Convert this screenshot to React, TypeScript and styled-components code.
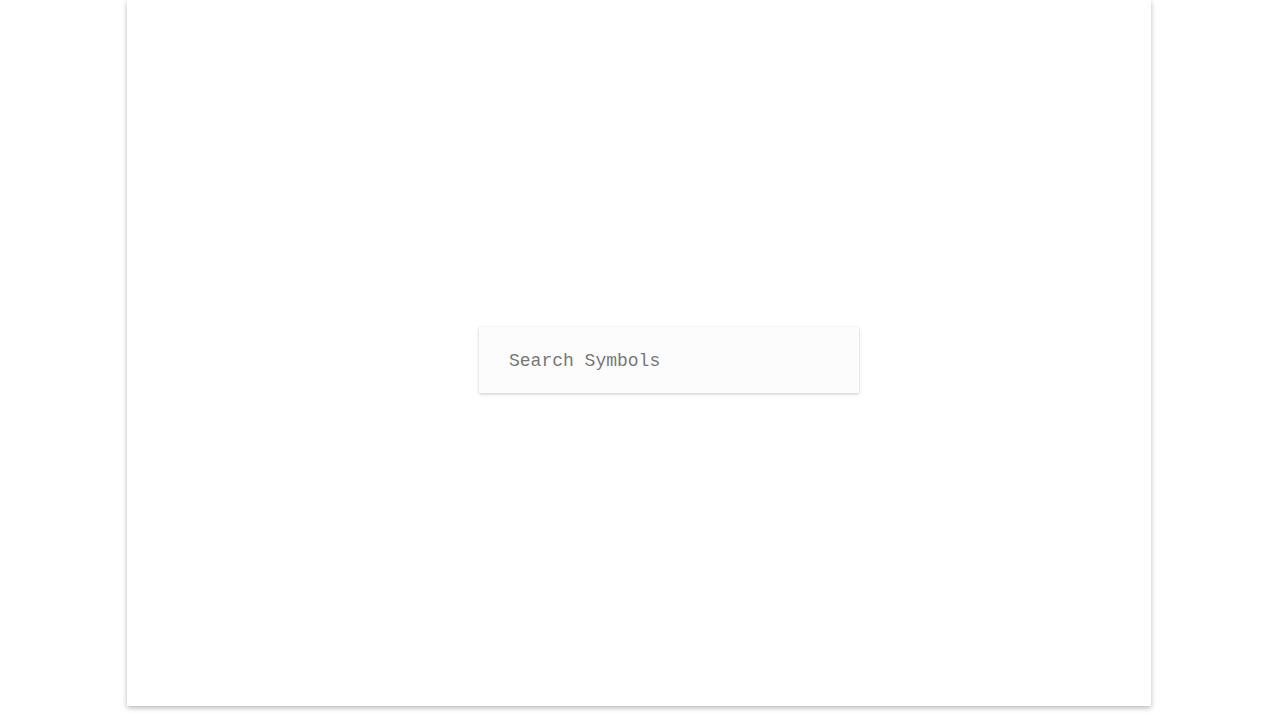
import { createGlobalStyle } from 'styled-components';
import styled from 'styled-components';

// シンボル検索の空画面。中央のパネルに検索ボックスだけが置かれている。

export default function App() {
  return (
    <>
      <GlobalStyle />
      <Page>
        <Panel>
          <SearchInput type="text" placeholder="Search Symbols" />
        </Panel>
      </Page>
    </>
  );
}

// ─── Styled Components ───────────────────────────────────────────

const GlobalStyle = createGlobalStyle`
  html, body {
    margin: 0;
    padding: 0;
    background-color: #ffffff;
  }
`;

// 奇数幅のウィンドウで中央寄せすると半ピクセル右にずれるので 1px 補正する
const Page = styled.div`
  display: flex;
  justify-content: center;
  height: 720px;
  padding-right: 1px;
  overflow: hidden;
`;

const Panel = styled.main`
  width: 1024px;
  height: 706px;
  box-sizing: border-box;
  display: flex;
  align-items: center;
  justify-content: center;
  padding: 14px 0 0 60px;
  background-color: #ffffff;
  box-shadow: 0 2px 5px rgba(0, 0, 0, 0.28);
`;

const SearchInput = styled.input`
  width: 380px;
  height: 66px;
  box-sizing: border-box;
  padding: 1px 30px 0;
  border: none;
  outline: none;
  background-color: #fcfcfc;
  box-shadow: 0 1px 3px rgba(0, 0, 0, 0.22);
  font-family: 'Liberation Mono', 'DejaVu Sans Mono', monospace;
  font-size: 18px;
  color: #333333;

  &::placeholder {
    color: #777777;
  }
`;
